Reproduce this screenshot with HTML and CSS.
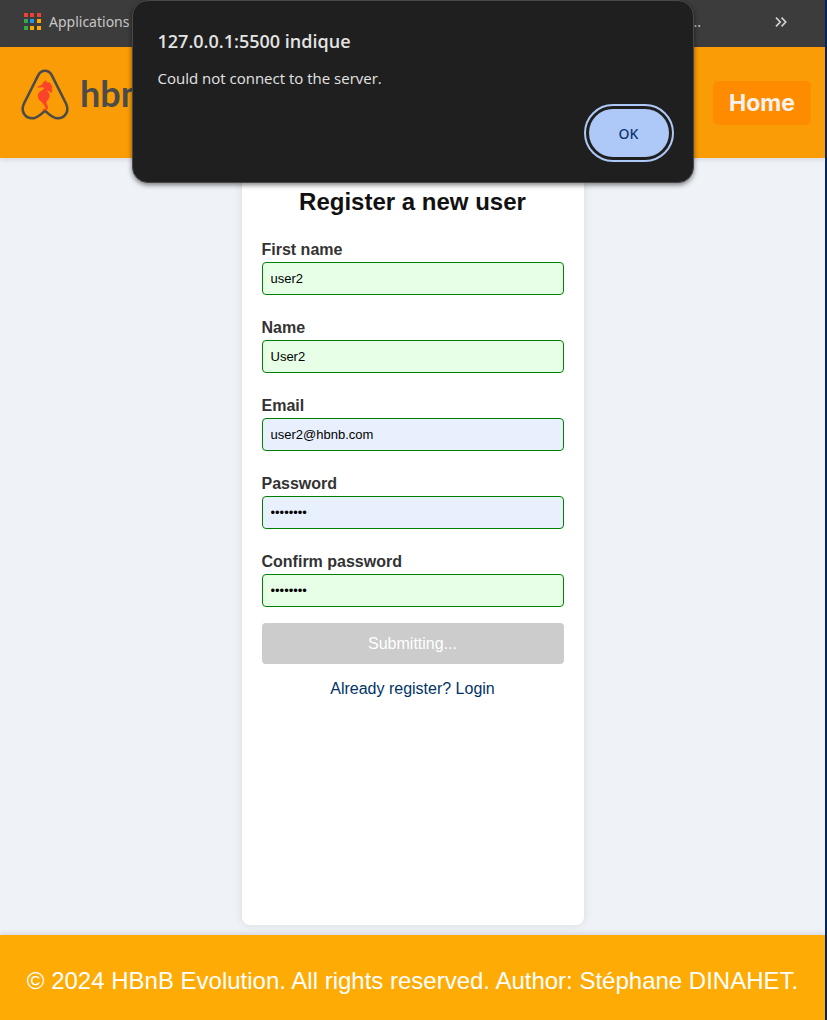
FILE: index.html
```html
<!DOCTYPE html>
<html lang="en">
<head>
<meta charset="utf-8">
<meta name="viewport" content="width=device-width, initial-scale=1">
<title>HBnB - Register</title>
<link rel="stylesheet" href="styles.css">
</head>
<body class="page">
<nav class="bookmarks">
  <button class="apps" type="button">
    <svg class="apps-icon" width="17" height="17" viewBox="0 0 17 17" aria-hidden="true">
      <g fill="#ee4035"><path d="M0 0h4v4H0zM6 0h4v4H6zM13 0h4v4h-4z"/></g>
      <path fill="#34a853" d="M0 6h4v4H0zM0 13h4v4H0z"/>
      <path fill="#2196f3" d="M6 6h4v4H6z"/>
      <path fill="#f9ab00" d="M13 6h4v4h-4zM6 13h4v4H6zM13 13h4v4h-4z"/>
    </svg>
    <span>Applications</span>
  </button>
  <span class="more-text">..</span>
  <button class="overflow" type="button" aria-label="More bookmarks">
    <svg width="12" height="10" viewBox="0 0 12 10" fill="none" stroke="#d0d0d0" stroke-width="1.7" aria-hidden="true"><path d="M1 .7 5.200 5 1 9.300M6.500 .7 10.700 5 6.500 9.300"/></svg>
  </button>
</nav>
<header class="header">
  <a class="logo" href="#" aria-label="hbnb">
    <svg width="48" height="52" viewBox="0 0 48 52" aria-hidden="true">
      <path fill="none" stroke="#4b4c49" stroke-width="2.600" stroke-linejoin="round" d="M24 1.800C20.500 1.800 18.700 3.600 17.300 6.200L3 34.500C-.5 42 3.500 49.300 11.500 49.300C17 49.300 20 45 24 41.800C28 45 31 49.300 36.500 49.300C44.500 49.300 48.500 42 45 34.500L30.700 6.200C29.300 3.600 27.500 1.800 24 1.800Z"/>
      <path fill="#fb432c" d="M25 11.300L25.800 13.200C28.500 13 30 14.200 30.200 16L31.500 17.500L30.700 19L31.500 21.500L30.200 24.500L28.600 22.200L25.600 21.500C27.500 23.500 29 25 28.600 27.800C28.300 30.300 25.600 31.500 25.400 33.500C25.300 35.300 27.200 36.300 27 39C26.800 41.500 22.500 42.300 20.800 40.200C22.500 40.500 24.800 40.300 24.500 38.600C24.200 37 22.500 36 21.500 34C20.500 32.500 17.800 31.500 17 28.500C16.300 25.500 18 22.800 20.700 21.500C22 20.800 23 20 23.200 18.700C21.500 18 19.500 18.200 17 18.800C16.500 18 17 17.300 18 17C19.800 16.500 21 15.800 21.700 14.500C22.300 13.300 23.500 12.500 25 11.300Z"/>
    </svg>
    <span class="logo-text">hbnb</span>
  </a>
  <a class="home" href="#">Home</a>
</header>
<main class="main">
  <form class="card">
    <h1 class="title">Register a new user</h1>
    <div class="fields">
      <div class="field"><label for="first">First name</label><input class="ok" id="first" type="text" value="user2"></div>
      <div class="field"><label for="name">Name</label><input class="ok" id="name" type="text" value="User2"></div>
      <div class="field"><label for="email">Email</label><input class="filled" id="email" type="email" value="user2@hbnb.com"></div>
      <div class="field"><label for="password">Password</label><input class="filled" id="password" type="password" value="password"></div>
      <div class="field"><label for="confirm">Confirm password</label><input class="ok" id="confirm" type="password" value="password"></div>
    </div>
    <button class="submit" type="submit" disabled>Submitting...</button>
    <a class="login" href="#">Already register? Login</a>
  </form>
</main>
<footer class="footer">© 2024 HBnB Evolution. All rights reserved. Author: Stéphane DINAHET.</footer>
<section class="dialog" role="alertdialog" aria-labelledby="dialog-title" aria-describedby="dialog-text">
  <h2 class="dialog-title" id="dialog-title">127.0.0.1:5500 indique</h2>
  <p class="dialog-text" id="dialog-text">Could not connect to the server.</p>
  <button class="dialog-ok" type="button">OK</button>
</section>
</body>
</html>
```
FILE: styles.css
```css
* {
  box-sizing: border-box;
}

.page {
  position: relative;
  margin: 0;
  min-height: 100vh;
  display: flex;
  flex-direction: column;
  background: #eff3f8;
  border-right: 2px solid #06235c;
  font-family: "Liberation Sans", Arial, sans-serif;
  font-size: 16px;
}

.bookmarks {
  display: flex;
  align-items: center;
  height: 47px;
  padding: 0 38px 4px 24px;
  background: #3c3c3c;
  color: #c7c7c7;
  font-family: "Noto Sans", "Open Sans", sans-serif;
  font-size: 14px;
}

.apps,
.overflow {
  display: flex;
  align-items: center;
  gap: 8px;
  padding: 0;
  border: 0;
  background: none;
  color: inherit;
  font: inherit;
}

.more-text {
  margin-left: auto;
  margin-right: 74px;
}

.header {
  display: flex;
  align-items: center;
  justify-content: space-between;
  height: 111px;
  padding: 0 14px 0 21px;
  background: #fa9c05;
  box-shadow: 0 2px 5px rgba(0, 0, 0, 0.1);
}

.logo {
  display: flex;
  align-items: center;
  gap: 11px;
  padding-bottom: 16px;
  color: #4b4c49;
  text-decoration: none;
}

.logo-text {
  padding-bottom: 4px;
  font: 700 36px/48px Lato, sans-serif;
}

.home {
  padding: 8px 16px;
  border-radius: 5px;
  background: #ff8c00;
  color: #f8f2ee;
  font: 700 23px/28px Inter, sans-serif;
  text-decoration: none;
}

.main {
  flex: 1;
  display: flex;
  justify-content: center;
  padding: 10px;
}

.card {
  display: flex;
  flex-direction: column;
  width: 100%;
  max-width: 342px;
  padding: 20px;
  border-radius: 8px;
  background: #fff;
  box-shadow: 0 0 10px rgba(0, 0, 0, 0.1);
}

.title {
  margin: 0 0 24px;
  color: #111;
  font-size: 24px;
  line-height: 28px;
  text-align: center;
}

.fields {
  display: flex;
  flex-direction: column;
  gap: 23px;
}

.field {
  display: flex;
  flex-direction: column;
  gap: 2px;
}

.field label {
  color: #333;
  font-weight: 700;
  line-height: 20px;
}

.field input {
  height: 33px;
  padding: 8px;
  border: 1px solid #008000;
  border-radius: 4px;
  color: #000;
  font: 13px "Liberation Sans", Arial, sans-serif;
}

.field .ok {
  background: #e6ffe6;
}

.field .filled {
  background: #e8f0fe;
}

.submit {
  margin: 16px 0 15px;
  height: 41px;
  border: 0;
  border-radius: 4px;
  background: #ccc;
  color: #fff;
  font: 16px "Liberation Sans", Arial, sans-serif;
}

.login {
  color: #003366;
  line-height: 20px;
  text-align: center;
  text-decoration: none;
}

.footer {
  padding: 31px 20px 25px;
  background: #ffab05;
  box-shadow: 0 -2px 5px rgba(0, 0, 0, 0.1);
  color: #fff;
  font-size: 24px;
  line-height: 29px;
  text-align: center;
}

.dialog {
  position: absolute;
  top: 0;
  left: 50%;
  transform: translateX(-50%);
  display: flex;
  flex-direction: column;
  width: 562px;
  max-width: 100%;
  padding: 28px 24px 25px 25px;
  border: 1px solid #484848;
  border-radius: 16px;
  background: #1f1f1f;
  box-shadow: 0 2px 5px rgba(0, 0, 0, 0.5);
  color: #e3e3e3;
  font-family: "Open Sans", "Noto Sans", sans-serif;
}

.dialog-title {
  margin: 0 0 12px;
  font-size: 18px;
  font-weight: 600;
  line-height: 25px;
}

.dialog-text {
  margin: 0 0 19px;
  font-size: 15px;
  line-height: 24px;
}

.dialog-ok {
  align-self: flex-end;
  width: 80px;
  height: 48px;
  border: 0;
  border-radius: 24px;
  outline: 2px solid #aec9f7;
  outline-offset: 3px;
  background: #aec9f7;
  color: #0b3470;
  font: 500 14px "Noto Sans", "Open Sans", sans-serif;
}
```
